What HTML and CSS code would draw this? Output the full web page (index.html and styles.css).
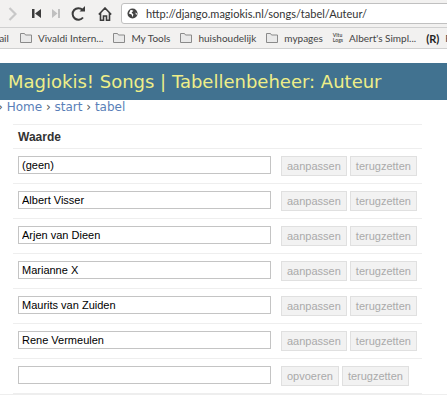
FILE: index.html
```html
<!DOCTYPE html>
<html lang="nl">
  <head>
    <meta charset="UTF-8" />
    <title>Magiokis! Songs | Tabellenbeheer: Auteur</title>
    <link rel="stylesheet" href="styles.css">
  </head>
  <body>
    <div class="toolbar">
      <svg class="nav-icon nav-forward" viewBox="0 0 9 14"><path d="M1.500 1l6 6-6 6" /></svg>
      <svg class="nav-icon nav-first" viewBox="0 0 9 9"><path d="M0 0h2.500v9H0zM9 0v9L3 4.500z" /></svg>
      <svg class="nav-icon nav-last" viewBox="0 0 8 9"><path d="M0 0l5.500 4.500L0 9zM6 0h2v9H6z" /></svg>
      <svg class="nav-icon nav-reload" viewBox="0 0 14 15"><path d="M12 11.500A5.800 5.800 0 1 1 11.500 3.800" /><path class="fill" d="M8.500 5.500H14V0z" /></svg>
      <svg class="nav-icon nav-home" viewBox="0 0 14 14"><path d="M.8 7.500L7 1l6.200 6.500M2.500 6v7.200h3V9h3v4.200h3V6" /></svg>
      <div class="urlbar">
        <svg class="globe" viewBox="0 0 12 12"><circle cx="6" cy="6" r="5.500" /><path d="M4 2l3 1-2 2 2 2-1 3-1-3-3-1zM9 5l2 1-1 2z" /></svg>
        <span>http://django.magiokis.nl/songs/tabel/Auteur/</span>
      </div>
    </div>
    <div class="bookmarks">
      <span class="bm bm-eerste">Mail</span>
      <span class="bm"><svg class="folder" viewBox="0 0 12 10"><path d="M.5 9.500V.5h4l1 1.500h6v7.500z" /></svg>Vivaldi Intern...</span>
      <span class="bm"><svg class="folder" viewBox="0 0 12 10"><path d="M.5 9.500V.5h4l1 1.500h6v7.500z" /></svg>My Tools</span>
      <span class="bm"><svg class="folder" viewBox="0 0 12 10"><path d="M.5 9.500V.5h4l1 1.500h6v7.500z" /></svg>huishoudelijk</span>
      <span class="bm"><svg class="folder" viewBox="0 0 12 10"><path d="M.5 9.500V.5h4l1 1.500h6v7.500z" /></svg>mypages</span>
      <span class="bm"><span class="vl-logo">Vitu<br>Logs</span>Albert's Simpl...</span>
      <span class="bm"><span class="r-logo">(R)</span>R</span>
    </div>

    <h1 class="banner">Magiokis! Songs | Tabellenbeheer: Auteur</h1>
    <div class="crumbs">› <a href="#">Home</a> › <a href="#">start</a> › <a href="#">tabel</a></div>

    <table class="tabel">
      <colgroup>
        <col class="kol-veld" />
        <col />
      </colgroup>
      <tr><th colspan="2">Waarde</th></tr>
      <tr>
        <td class="veld"><input type="text" value="(geen)" /></td>
        <td class="knoppen"><button disabled>aanpassen</button><button disabled>terugzetten</button></td>
      </tr>
      <tr>
        <td class="veld"><input type="text" value="Albert Visser" /></td>
        <td class="knoppen"><button disabled>aanpassen</button><button disabled>terugzetten</button></td>
      </tr>
      <tr>
        <td class="veld"><input type="text" value="Arjen van Dieen" /></td>
        <td class="knoppen"><button disabled>aanpassen</button><button disabled>terugzetten</button></td>
      </tr>
      <tr>
        <td class="veld"><input type="text" value="Marianne X" /></td>
        <td class="knoppen"><button disabled>aanpassen</button><button disabled>terugzetten</button></td>
      </tr>
      <tr>
        <td class="veld"><input type="text" value="Maurits van Zuiden" /></td>
        <td class="knoppen"><button disabled>aanpassen</button><button disabled>terugzetten</button></td>
      </tr>
      <tr>
        <td class="veld"><input type="text" value="Rene Vermeulen" /></td>
        <td class="knoppen"><button disabled>aanpassen</button><button disabled>terugzetten</button></td>
      </tr>
      <tr>
        <td class="veld"><input type="text" value="" /></td>
        <td class="knoppen"><button disabled>opvoeren</button><button disabled>terugzetten</button></td>
      </tr>
    </table>
    <div class="onderlijn"></div>
  </body>
</html>
```
FILE: styles.css
```css
* {
  box-sizing: border-box;
}

html,
body {
  margin: 0;
  height: 410px;
  overflow: hidden;
}

body {
  background: #fff;
  font-family: "Liberation Sans", Arial, sans-serif;
  color: #222;
}

.toolbar {
  height: 28px;
  display: flex;
  align-items: center;
  padding-left: 8px;
  background: #f2f1f0;
  border-bottom: 1px solid #d0d0d0;
}

.nav-icon {
  display: block;
  flex: none;
  fill: none;
  stroke: #3c3c3c;
  stroke-width: 2;
}

.nav-forward {
  width: 9px;
  height: 14px;
  stroke: #c8c8c8;
  stroke-width: 2.200;
}

.nav-first {
  width: 9px;
  height: 9px;
  margin-left: 15px;
  fill: #3c3c3c;
  stroke: none;
}

.nav-last {
  width: 8px;
  height: 9px;
  margin-left: 11px;
  fill: #c0c0c0;
  stroke: none;
}

.nav-reload {
  width: 14px;
  height: 15px;
  margin-left: 11px;
}

.nav-reload .fill {
  fill: #3c3c3c;
  stroke: none;
}

.nav-home {
  width: 14px;
  height: 14px;
  margin-left: 13px;
  stroke-width: 1.600;
}

.urlbar {
  flex: 1;
  height: 21px;
  margin-left: 9px;
  margin-right: -4px;
  display: flex;
  align-items: center;
  gap: 8px;
  padding-left: 5px;
  background: #fff;
  border: 1px solid #c0c0c0;
  border-radius: 3px;
  font-family: Lato, sans-serif;
  font-size: 11px;
  color: #333;
}

.globe {
  width: 11px;
  height: 11px;
  fill: #444;
  flex: none;
}

.globe path {
  fill: #fff;
}

.bookmarks {
  height: 21px;
  display: flex;
  align-items: center;
  gap: 10px;
  margin-left: -10px;
  white-space: nowrap;
  background: #f2f1f0;
  border-bottom: 1px solid #d0d0d0;
  font-family: Lato, sans-serif;
  font-size: 10px;
  color: #444;
}

.bm {
  display: flex;
  align-items: center;
  gap: 6px;
}

.bm-eerste {
  margin-right: 1px;
}

.folder {
  width: 12px;
  height: 10px;
  fill: #e9e9e9;
  stroke: #8a8a8a;
}

.vl-logo {
  font-size: 5px;
  line-height: 5px;
  font-weight: bold;
  color: #555;
}

.r-logo {
  font-size: 11px;
  font-weight: bold;
  color: #222;
}

.banner {
  margin: 14px 0 0;
  height: 37px;
  padding-left: 8px;
  background: #417290;
  color: #eeee88;
  font-family: "DejaVu Sans", sans-serif;
  font-size: 18px;
  font-weight: normal;
  line-height: 37px;
  white-space: nowrap;
}

.crumbs {
  height: 14px;
  margin-left: -2px;
  font-family: "DejaVu Sans", sans-serif;
  font-size: 12px;
  line-height: 14px;
  color: #555;
}

.crumbs a {
  color: #5a7fb8;
  text-decoration: none;
}

.tabel {
  width: 409px;
  margin: 10px 0 0 13px;
  table-layout: fixed;
  border-collapse: collapse;
  border-bottom: 1px solid #eee;
  font-size: 11px;
}

.kol-veld {
  width: 258px;
}

.tabel tr {
  border-top: 1px solid #eee;
}

.tabel th {
  height: 24px;
  padding: 0 5px;
  text-align: left;
  font-size: 12px;
  color: #333;
}

.tabel td {
  height: 35px;
  padding: 0;
}

.tabel .veld {
  padding-left: 5px;
}

.tabel input {
  display: block;
  width: 253px;
  height: 18px;
  margin-top: -3px;
  padding: 0 3px;
  border: 1px solid #c4c4c4;
  font-family: "Liberation Sans", Arial, sans-serif;
  font-size: 11px;
  color: #000;
}

.tabel .knoppen {
  padding-left: 10px;
  white-space: nowrap;
}

.tabel button {
  height: 20px;
  padding: 0 5px;
  background: #f2f2f2;
  border: 1px solid #e0e0e0;
  font-family: "Liberation Sans", Arial, sans-serif;
  font-size: 11px;
  color: #aaa;
}

.tabel button + button {
  margin-left: 3px;
}

.onderlijn {
  height: 1px;
  background: #eee;
}
```
